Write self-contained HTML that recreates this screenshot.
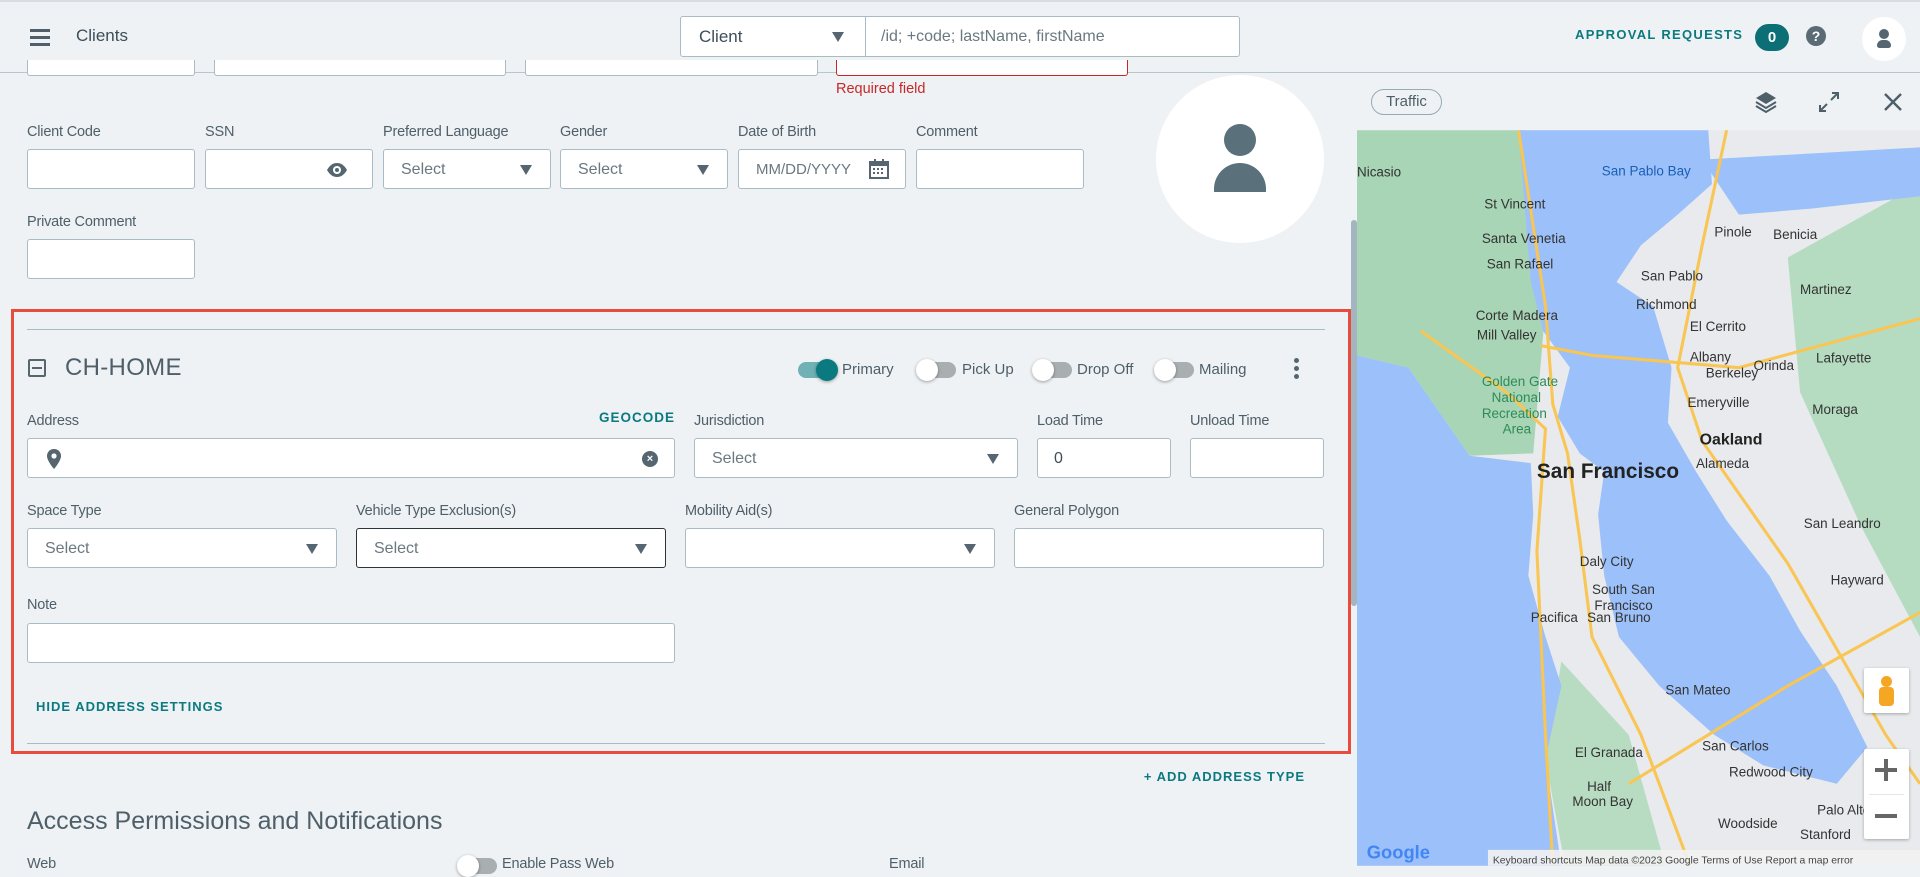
<!DOCTYPE html>
<html><head><meta charset="utf-8">
<style>
*{box-sizing:border-box;margin:0;padding:0}
body{width:1920px;height:866px;overflow:hidden;background:#eef2f5;font-family:"Liberation Sans",sans-serif;color:#4f5f69;position:relative}
.a{position:absolute}
.lbl{position:absolute;font-size:14.5px;color:#4f5f69;letter-spacing:-0.2px}
.in{position:absolute;background:#fff;border:1px solid #a9bcc6;border-radius:3px;height:40px}
.sel{font-size:16px;color:#6a7880;padding:11px 0 0 17px}
.tri{position:absolute;right:18px;top:15px;width:0;height:0;border-left:6px solid transparent;border-right:6px solid transparent;border-top:10px solid #556670}
.tg{position:absolute;height:16px;width:38px;border-radius:8px;background:#a9aeb1}
.tg i{position:absolute;top:-3px;left:-2px;width:22px;height:22px;border-radius:50%;background:#fff;box-shadow:0 1px 3px rgba(0,0,0,.35)}
.tg.on{background:#6fb1b4}
.tg.on i{left:auto;right:-2px;background:#0b7a80}
.tl{position:absolute;font-size:15px;color:#4f5f69}
.teal{color:#0b7a80;font-weight:bold;letter-spacing:1px}
</style></head><body>
<!-- header -->
<div class="a" style="left:0;top:0;width:1920px;height:73px;border-top:2px solid #d7dee3;border-bottom:1px solid #b8c6ce"></div>
<div class="a" style="left:30px;top:29px;width:20px;height:3px;background:#4f5f69;box-shadow:0 7px 0 #4f5f69,0 14px 0 #4f5f69"></div>
<div class="a" style="left:76px;top:26px;font-size:17px;color:#3e4e58">Clients</div>
<div class="a" style="left:680px;top:16px;width:560px;height:41px;background:#fff;border:1px solid #a9bcc6;border-radius:3px"></div>
<div class="a" style="left:865px;top:16px;width:1px;height:41px;background:#a9bcc6"></div>
<div class="a" style="left:699px;top:27px;font-size:17px;color:#3e4e58">Client</div>
<div class="a" style="left:832px;top:32px;border-left:6px solid transparent;border-right:6px solid transparent;border-top:10px solid #556670"></div>
<div class="a" style="left:881px;top:28px;font-size:16px;color:#6a7880">/id; +code; lastName, firstName</div>
<div class="a teal" style="left:1575px;top:27px;font-size:13px;letter-spacing:1.3px">APPROVAL REQUESTS</div>
<div class="a" style="left:1755px;top:24px;width:34px;height:27px;border-radius:14px;background:#0b6f75;color:#fff;font-size:15px;font-weight:bold;text-align:center;line-height:27px">0</div>
<div class="a" style="left:1806px;top:26px;width:20px;height:20px;border-radius:50%;background:#5a6b75;color:#fff;font-size:14px;font-weight:bold;text-align:center;line-height:20px">?</div>
<div class="a" style="left:1862px;top:17px;width:44px;height:44px;border-radius:50%;background:#fff"></div>
<div class="a" style="left:1879px;top:29px;width:10px;height:10px;border-radius:50%;background:#556670"></div>
<div class="a" style="left:1877px;top:40px;width:14px;height:8px;border-radius:7px 7px 3px 3px;background:#556670"></div>

<!-- partial top fields -->
<div class="a" style="left:27px;top:60px;width:168px;height:16px;background:#fff;border:1px solid #a9bcc6;border-top:none;border-radius:0 0 3px 3px"></div>
<div class="a" style="left:214px;top:60px;width:292px;height:16px;background:#fff;border:1px solid #a9bcc6;border-top:none;border-radius:0 0 3px 3px"></div>
<div class="a" style="left:525px;top:60px;width:293px;height:16px;background:#fff;border:1px solid #a9bcc6;border-top:none;border-radius:0 0 3px 3px"></div>
<div class="a" style="left:836px;top:60px;width:292px;height:16px;background:#fff;border:1px solid #c62828;border-top:none;border-radius:0 0 3px 3px"></div>
<div class="a" style="left:836px;top:81px;font-size:14.5px;color:#c62828">Required field</div>

<div class="lbl" style="left:27px;top:124px">Client Code</div>
<div class="lbl" style="left:205px;top:124px">SSN</div>
<div class="lbl" style="left:383px;top:124px">Preferred Language</div>
<div class="lbl" style="left:560px;top:124px">Gender</div>
<div class="lbl" style="left:738px;top:124px">Date of Birth</div>
<div class="lbl" style="left:916px;top:124px">Comment</div>
<div class="in" style="left:27px;top:149px;width:168px"></div>
<div class="in" style="left:205px;top:149px;width:168px"><svg class="a" style="left:120px;top:12px" width="22" height="16" viewBox="0 0 22 16"><path d="M1 8C4 3 7 1 11 1s7 2 10 7c-3 5-6 7-10 7S4 13 1 8z" fill="#556670"/><circle cx="11" cy="8" r="4" fill="#fff"/><circle cx="11" cy="8" r="2" fill="#556670"/></svg></div>
<div class="in sel" style="left:383px;top:149px;width:168px">Select<div class="tri"></div></div>
<div class="in sel" style="left:560px;top:149px;width:168px">Select<div class="tri"></div></div>
<div class="in sel" style="left:738px;top:149px;width:168px;font-size:15px">MM/DD/YYYY<svg class="a" style="left:130px;top:9px" width="20" height="20" viewBox="0 0 20 20"><rect x="1" y="3" width="18" height="16" fill="none" stroke="#556670" stroke-width="2"/><rect x="1" y="3" width="18" height="4" fill="#556670"/><rect x="5" y="0" width="2" height="5" fill="#556670"/><rect x="13" y="0" width="2" height="5" fill="#556670"/><g fill="#556670"><rect x="4" y="9" width="2" height="2"/><rect x="8" y="9" width="2" height="2"/><rect x="12" y="9" width="2" height="2"/><rect x="4" y="13" width="2" height="2"/><rect x="8" y="13" width="2" height="2"/><rect x="12" y="13" width="2" height="2"/></g></svg></div>
<div class="in" style="left:916px;top:149px;width:168px"></div>
<div class="lbl" style="left:27px;top:214px">Private Comment</div>
<div class="in" style="left:27px;top:239px;width:168px"></div>

<div class="a" style="left:1156px;top:75px;width:168px;height:168px;border-radius:50%;background:#fff"></div>
<div class="a" style="left:1224px;top:124px;width:32px;height:32px;border-radius:50%;background:#5a707b"></div>
<div class="a" style="left:1214px;top:163px;width:52px;height:29px;border-radius:26px 26px 0 0;background:#5a707b"></div>

<!-- scrollbar -->
<div class="a" style="left:1351px;top:220px;width:6px;height:386px;border-radius:3px;background:#a3b5bf"></div>

<!-- red box -->
<div class="a" style="left:11px;top:309px;width:1340px;height:445px;border:3px solid #e84c3d"></div>
<div class="a" style="left:27px;top:329px;width:1298px;height:1px;background:#a9bcc6"></div>
<div class="a" style="left:27px;top:743px;width:1298px;height:1px;background:#a9bcc6"></div>
<div class="a" style="left:28px;top:359px;width:18px;height:18px;border:2px solid #556670;border-radius:2px"><div class="a" style="left:2px;top:6px;width:10px;height:2px;background:#556670"></div></div>
<div class="a" style="left:65px;top:354px;font-size:24px;color:#4f5f69;letter-spacing:0.3px;font-weight:300">CH-HOME</div>
<div class="tg on" style="left:798px;top:362px"><i></i></div><div class="tl" style="left:842px;top:361px">Primary</div>
<div class="tg" style="left:918px;top:362px"><i></i></div><div class="tl" style="left:962px;top:361px">Pick Up</div>
<div class="tg" style="left:1034px;top:362px"><i></i></div><div class="tl" style="left:1077px;top:361px">Drop Off</div>
<div class="tg" style="left:1156px;top:362px"><i></i></div><div class="tl" style="left:1199px;top:361px">Mailing</div>
<div class="a" style="left:1294px;top:358px;width:5px;height:5px;border-radius:50%;background:#556670;box-shadow:0 8px 0 #556670,0 16px 0 #556670"></div>

<div class="lbl" style="left:27px;top:413px">Address</div>
<div class="a teal" style="left:575px;width:100px;text-align:right;top:410px;font-size:13.5px">GEOCODE</div>
<div class="in" style="left:27px;top:438px;width:648px"><svg class="a" style="left:19px;top:10px" width="14" height="20" viewBox="0 0 14 20"><path d="M7 0C3 0 0 3 0 7c0 5 7 13 7 13s7-8 7-13c0-4-3-7-7-7z" fill="#556670"/><circle cx="7" cy="7" r="2.6" fill="#fff"/></svg><div class="a" style="left:614px;top:12px;width:16px;height:16px;border-radius:50%;background:#556670;color:#fff;font-size:11px;font-weight:bold;text-align:center;line-height:16px">×</div></div>
<div class="lbl" style="left:694px;top:413px">Jurisdiction</div>
<div class="in sel" style="left:694px;top:438px;width:324px">Select<div class="tri"></div></div>
<div class="lbl" style="left:1037px;top:413px">Load Time</div>
<div class="in sel" style="left:1037px;top:438px;width:134px;color:#3e4e58;padding-left:16px">0</div>
<div class="lbl" style="left:1190px;top:413px">Unload Time</div>
<div class="in" style="left:1190px;top:438px;width:134px"></div>

<div class="lbl" style="left:27px;top:503px">Space Type</div>
<div class="in sel" style="left:27px;top:528px;width:310px">Select<div class="tri"></div></div>
<div class="lbl" style="left:356px;top:503px">Vehicle Type Exclusion(s)</div>
<div class="in sel" style="left:356px;top:528px;width:310px;border-color:#2a3439">Select<div class="tri"></div></div>
<div class="lbl" style="left:685px;top:503px">Mobility Aid(s)</div>
<div class="in sel" style="left:685px;top:528px;width:310px"><div class="tri"></div></div>
<div class="lbl" style="left:1014px;top:503px">General Polygon</div>
<div class="in" style="left:1014px;top:528px;width:310px"></div>

<div class="lbl" style="left:27px;top:597px">Note</div>
<div class="in" style="left:27px;top:623px;width:648px"></div>
<div class="a teal" style="left:36px;top:699px;font-size:13px">HIDE ADDRESS SETTINGS</div>

<div class="a teal" style="left:1105px;width:200px;text-align:right;top:769px;font-size:13px">+ ADD ADDRESS TYPE</div>
<div class="a" style="left:27px;top:807px;font-size:25px;color:#4f5f69;font-weight:300">Access Permissions and Notifications</div>
<div class="lbl" style="left:27px;top:856px">Web</div>
<div class="tg" style="left:459px;top:858px"><i></i></div>
<div class="lbl" style="left:502px;top:856px">Enable Pass Web</div>
<div class="lbl" style="left:889px;top:856px">Email</div>

<!-- map panel -->
<div class="a" style="left:1371px;top:89px;width:71px;height:26px;border:1px solid #98aab4;border-radius:13px;font-size:15px;color:#4f5f69;text-align:center;line-height:24px">Traffic</div>
<svg class="a" style="left:1754px;top:90px" width="24" height="24" viewBox="0 0 24 24"><path d="M12 2L2 8l10 6 10-6z" fill="#4f5f69"/><path d="M2 12l10 6 10-6M2 16l10 6 10-6" fill="none" stroke="#4f5f69" stroke-width="2"/></svg>
<svg class="a" style="left:1818px;top:91px" width="22" height="22" viewBox="0 0 22 22" fill="none" stroke="#4f5f69" stroke-width="2"><path d="M13 9l7-7M14 2h6v6M9 13l-7 7M2 14v6h6"/></svg>
<svg class="a" style="left:1883px;top:92px" width="20" height="20" viewBox="0 0 20 20" stroke="#4f5f69" stroke-width="2.4"><path d="M2 2l16 16M18 2L2 18"/></svg>

<svg class="a" style="left:1357px;top:130px" width="563" height="736" viewBox="1108 106 460 601" font-family="Liberation Sans, sans-serif">
<rect x="1108" y="106" width="460" height="601" fill="#e8eaed"/>
<path d="M1108 106H1245L1262 250L1252 370L1200 372L1150 300L1108 290Z" fill="#a8d5b5"/>
<path d="M1460 210L1568 150V520L1520 430L1470 320Z" fill="#b5dcc0"/>
<path d="M1275 540L1330 600L1360 707H1278L1262 620Z" fill="#b8dcc2"/>
<path d="M1108 290L1150 300L1200 372L1250 378L1252 420L1248 470L1262 520L1275 560L1262 620L1275 707H1108Z" fill="#9cc0f9"/>
<path d="M1240 106H1395L1398 150L1370 175L1340 200L1320 230L1350 250L1365 300L1362 345L1385 385L1410 425L1445 470L1470 515L1500 560L1525 610L1500 640L1440 625L1400 600L1355 560L1322 520L1310 470L1305 420L1310 385L1290 370L1272 340L1282 300L1260 270L1250 230Z" fill="#9cc0f9"/>
<path d="M1390 130L1568 120V160L1480 170L1420 175Z" fill="#9cc0f9"/>
<g fill="none" stroke="#f9c553" stroke-width="2.5"><path d="M1240 106L1262 250L1268 330L1280 370L1290 440L1300 520L1340 600L1380 707"/><path d="M1258 282L1300 290L1420 300L1568 260"/><path d="M1410 106L1390 200L1370 300L1390 360L1460 460L1540 600L1568 640"/><path d="M1330 640L1460 560L1568 500"/><path d="M1160 270L1230 320L1262 350L1255 450L1262 600L1268 707"/></g>
<g font-size="11" fill="#333"><text x="1108" y="144">Nicasio</text><text x="1212" y="170">St Vincent</text><text x="1210" y="198">Santa Venetia</text><text x="1214" y="219">San Rafael</text><text x="1205" y="261">Corte Madera</text><text x="1206" y="277">Mill Valley</text><text x="1400" y="193">Pinole</text><text x="1340" y="229">San Pablo</text><text x="1336" y="252">Richmond</text><text x="1380" y="270">El Cerrito</text><text x="1380" y="295">Albany</text><text x="1393" y="308">Berkeley</text><text x="1378" y="332">Emeryville</text><text x="1448" y="195">Benicia</text><text x="1470" y="240">Martinez</text><text x="1483" y="296">Lafayette</text><text x="1432" y="302">Orinda</text><text x="1480" y="338">Moraga</text><text x="1385" y="382">Alameda</text><text x="1290" y="462">Daly City</text><text x="1300" y="485">South San</text><text x="1302" y="498">Francisco</text><text x="1250" y="508">Pacifica</text><text x="1296" y="508">San Bruno</text><text x="1360" y="567">San Mateo</text><text x="1473" y="431">San Leandro</text><text x="1495" y="477">Hayward</text><text x="1390" y="613">San Carlos</text><text x="1412" y="634">Redwood City</text><text x="1286" y="618">El Granada</text><text x="1296" y="646">Half</text><text x="1284" y="658">Moon Bay</text><text x="1484" y="665">Palo Alto</text><text x="1403" y="676">Woodside</text><text x="1470" y="685">Stanford</text><text x="1308" y="143" fill="#1a5fb4">San Pablo Bay</text><text x="1210" y="315" fill="#2e8b57">Golden Gate</text><text x="1218" y="328" fill="#2e8b57">National</text><text x="1210" y="341" fill="#2e8b57">Recreation</text><text x="1227" y="354" fill="#2e8b57">Area</text></g>
<text x="1388" y="363" font-size="13" font-weight="bold" fill="#222">Oakland</text>
<text x="1255" y="390" font-size="17" font-weight="bold" fill="#222">San Francisco</text>
<text x="1116" y="701" font-size="15" font-weight="bold" fill="#4285f4">Google</text>
<rect x="1215" y="694" width="353" height="13" fill="#f2f2f2" opacity=".9"/>
<text x="1219" y="705" font-size="8.5" fill="#444">Keyboard shortcuts    Map data ©2023 Google    Terms of Use    Report a map error</text>
</svg>
<div class="a" style="left:1864px;top:668px;width:45px;height:45px;background:#fff;border-radius:2px;box-shadow:0 1px 3px rgba(0,0,0,.3)"><div class="a" style="left:17px;top:8px;width:11px;height:11px;border-radius:50%;background:#f5a623"></div><div class="a" style="left:15px;top:19px;width:15px;height:19px;border-radius:4px;background:#f5a623"></div></div>
<div class="a" style="left:1864px;top:749px;width:45px;height:90px;background:#fff;border-radius:2px;box-shadow:0 1px 3px rgba(0,0,0,.3)"><div class="a" style="left:11px;top:19px;width:22px;height:4px;background:#666"></div><div class="a" style="left:20px;top:10px;width:4px;height:22px;background:#666"></div><div class="a" style="left:5px;top:45px;width:35px;height:1px;background:#e6e6e6"></div><div class="a" style="left:11px;top:65px;width:22px;height:4px;background:#666"></div></div>
</body></html>
